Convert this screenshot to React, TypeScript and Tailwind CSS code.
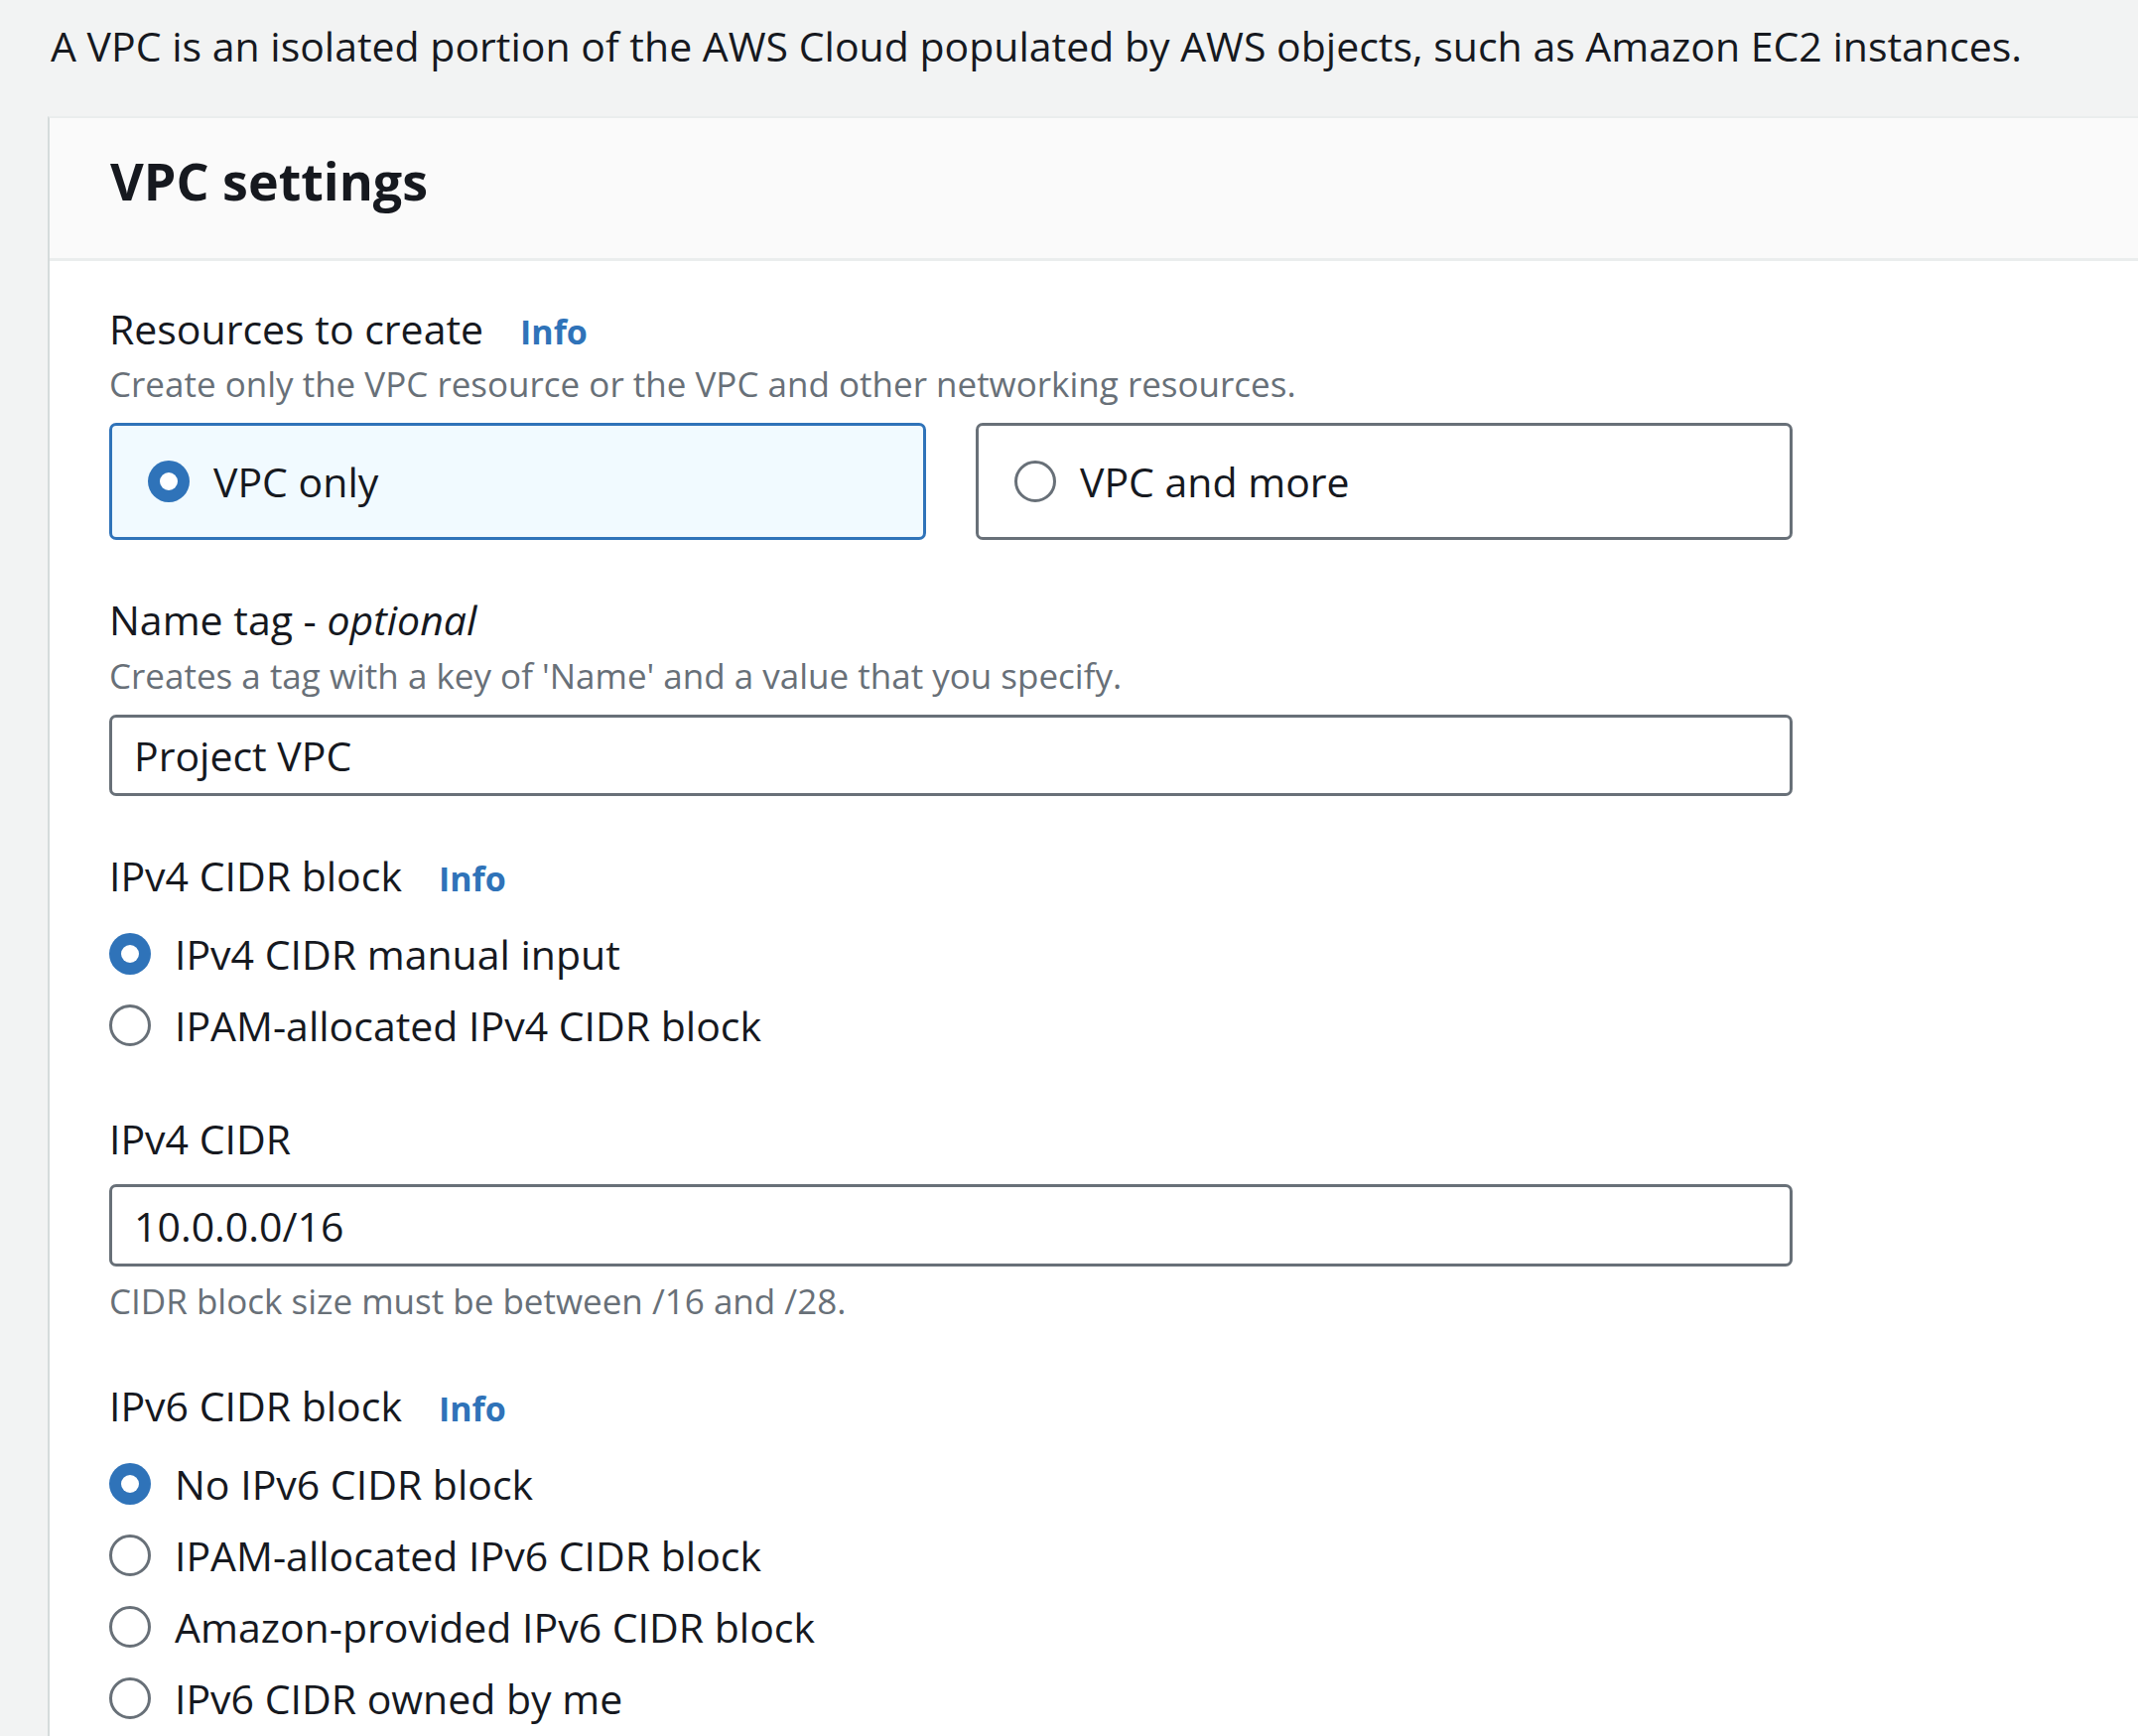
import React from "react";

function Radio({ checked }: { checked: boolean }) {
  if (checked) {
    return (
      <span className="flex h-[42px] w-[42px] shrink-0 items-center justify-center rounded-full bg-[#2f73b9]">
        <span className="h-[18px] w-[18px] rounded-full bg-white" />
      </span>
    );
  }
  return (
    <span className="block h-[42px] w-[42px] shrink-0 rounded-full border-[3px] border-[#687078] bg-white" />
  );
}

function Info() {
  return (
    <span className="ml-[37px] text-[34px] font-bold leading-[46px] text-[#2f73b9]">Info</span>
  );
}

function RadioRow({ checked, label }: { checked: boolean; label: string }) {
  return (
    <div className="flex h-[56px] items-center">
      <Radio checked={checked} />
      <span className="ml-[24px] text-[41px] leading-[56px] text-[#16191f]">{label}</span>
    </div>
  );
}

export default function App() {
  return (
    <div
      className="min-h-screen bg-[#f2f3f3] pl-[48px] pt-[18px] text-[#16191f]"
      style={{ fontFamily: '"Open Sans", "Noto Sans", sans-serif' }}
    >
      <p className="mb-[43px] pl-[3px] text-[41px] leading-[56px]">
        A VPC is an isolated portion of the AWS Cloud populated by AWS objects, such as Amazon EC2 instances.
      </p>

      <div className="border-l-2 border-t-2 border-l-[#d5dbdb] border-t-[#eaeded] bg-white">
        <div className="border-b-[3px] border-[#eaeded] bg-[#fafafa] pb-[42px] pl-[61px] pt-[27px]">
          <h2 className="text-[52px] font-bold leading-[72px]">VPC settings</h2>
        </div>

        <div className="w-[1756px] pb-[40px] pl-[60px] pt-[40px]">
          {/* Resources to create */}
          <div className="flex h-[56px] items-baseline">
            <span className="text-[41px] leading-[56px]">Resources to create</span>
            <Info />
          </div>
          <p className="mt-[4px] text-[35px] leading-[48px] text-[#687078]">
            Create only the VPC resource or the VPC and other networking resources.
          </p>
          <div className="mt-[15px] flex gap-[50px]">
            <div className="flex h-[118px] w-[824px] items-center rounded-[7px] border-[3px] border-[#2f73b9] bg-[#f1faff] pl-[36px]">
              <Radio checked={true} />
              <span className="ml-[24px] text-[41px] leading-[56px]">VPC only</span>
            </div>
            <div className="flex h-[118px] w-[824px] items-center rounded-[7px] border-[3px] border-[#687078] bg-white pl-[36px]">
              <Radio checked={false} />
              <span className="ml-[24px] text-[41px] leading-[56px]">VPC and more</span>
            </div>
          </div>

          {/* Name tag */}
          <div className="mt-[52px] text-[41px] leading-[56px]">
            Name tag - <span className="italic">optional</span>
          </div>
          <p className="mt-[5px] text-[35px] leading-[48px] text-[#687078]">
            Creates a tag with a key of 'Name' and a value that you specify.
          </p>
          <div className="mt-[15px] flex h-[82px] w-[1696px] items-center rounded-[7px] border-[3px] border-[#687078] bg-white px-[22px]">
            <span className="text-[41px] leading-[56px]">Project VPC</span>
          </div>

          {/* IPv4 CIDR block */}
          <div className="mt-[52px] flex h-[56px] items-baseline">
            <span className="text-[41px] leading-[56px]">IPv4 CIDR block</span>
            <Info />
          </div>
          <div className="mt-[23px] flex flex-col gap-[16px]">
            <RadioRow checked={true} label="IPv4 CIDR manual input" />
            <RadioRow checked={false} label="IPAM-allocated IPv4 CIDR block" />
          </div>

          {/* IPv4 CIDR */}
          <div className="mt-[58px] text-[41px] leading-[56px]">IPv4 CIDR</div>
          <div className="mt-[18px] flex h-[83px] w-[1696px] items-center rounded-[7px] border-[3px] border-[#687078] bg-white px-[22px]">
            <span className="text-[41px] leading-[56px]">10.0.0.0/16</span>
          </div>
          <p className="mt-[11px] text-[35px] leading-[48px] text-[#687078]">
            CIDR block size must be between /16 and /28.
          </p>

          {/* IPv6 CIDR block */}
          <div className="mt-[53px] flex h-[56px] items-baseline">
            <span className="text-[41px] leading-[56px]">IPv6 CIDR block</span>
            <Info />
          </div>
          <div className="mt-[23px] flex flex-col gap-[16px]">
            <RadioRow checked={true} label="No IPv6 CIDR block" />
            <RadioRow checked={false} label="IPAM-allocated IPv6 CIDR block" />
            <RadioRow checked={false} label="Amazon-provided IPv6 CIDR block" />
            <RadioRow checked={false} label="IPv6 CIDR owned by me" />
          </div>
        </div>
      </div>
    </div>
  );
}
